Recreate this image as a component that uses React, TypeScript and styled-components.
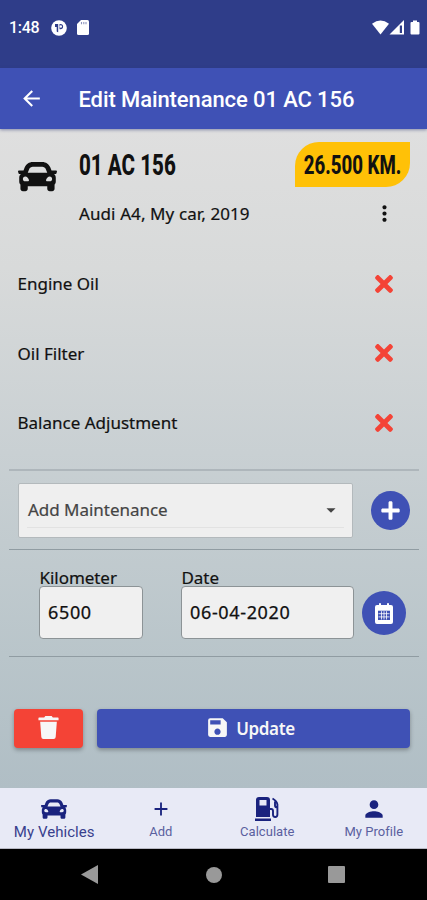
import React from 'react';
import styled, { createGlobalStyle } from 'styled-components';
import { FaCar, FaTimes, FaPlus } from 'react-icons/fa';
import { MdArrowBack, MdSave, MdPerson, MdMoreVert, MdAdd, MdArrowDropDown } from 'react-icons/md';

const GlobalStyle = createGlobalStyle`
  * { box-sizing: border-box; }
  body { margin: 0; font-family: 'Noto Sans', 'Open Sans', sans-serif; }
  svg { display: block; flex: none; }
`;

const Screen = styled.div`
  width: 427px;
  height: 900px;
  display: flex;
  flex-direction: column;
  overflow: hidden;
  background: #000;
`;

const StatusBar = styled.header`
  height: 68px;
  flex: none;
  display: flex;
  justify-content: space-between;
  align-items: flex-start;
  padding: 18px 6px 0 9px;
  background: #2f3d89;
  color: #fff;
  font: 500 16px/20px Roboto, sans-serif;
`;

const StatusGroup = styled.div<{ $gap: number }>`
  display: flex;
  align-items: center;
  height: 19px;
  gap: ${p => p.$gap}px;
`;

const Clock = styled.span`
  width: 32px;
  letter-spacing: -0.3px;
`;

const AppBar = styled.div`
  height: 60.5px;
  flex: none;
  display: flex;
  align-items: center;
  gap: 36px;
  padding: 1px 0 0 18.5px;
  background: #3f51b5;
  color: #fff;
  position: relative;
  box-shadow: 0 1px 3px rgba(50, 60, 120, 0.5);
`;

const Title = styled.h1`
  margin: 2px 0 0 -1px;
  font: 500 22px/30px Roboto, sans-serif;
  letter-spacing: -0.1px;
  white-space: nowrap;
`;

const Content = styled.main`
  height: 659.5px;
  flex: none;
  background: linear-gradient(180deg, #dfdfdf 0%, #d8dada 21%, #c9d0d3 49%, #b9c5ca 80%, #b0bec5 100%);
  color: #111;
`;

const Vehicle = styled.section`
  height: 120.5px;
  display: grid;
  grid-template-columns: 61px 1fr auto;
  padding-left: 18px;
`;

const VehicleIcon = styled.div`
  padding-top: 28px;
`;

const VehicleText = styled.div`
  padding-top: 20.5px;
`;

const Plate = styled.div`
  height: 32px;
  width: 130px;
  font: 800 29px/32px Roboto, sans-serif;
  white-space: nowrap;
  transform: scaleX(0.71);
  transform-origin: 0 50%;
`;

const Description = styled.div`
  margin-top: 21px;
  font-size: 17px;
  line-height: 24px;
  letter-spacing: 0.1px;
  white-space: nowrap;
  -webkit-text-stroke: 0.2px currentColor;
`;

const VehicleSide = styled.div`
  width: 132px;
  padding-top: 13.5px;
`;

const Badge = styled.div`
  width: 115px;
  height: 45px;
  display: flex;
  align-items: center;
  justify-content: center;
  border-radius: 24px 0 24px 0;
  background: #ffc107;
`;

const BadgeText = styled.span`
  font: 800 25px/30px Roboto, sans-serif;
  white-space: nowrap;
  transform: translateY(1px) scaleX(0.745);
`;

const MenuButton = styled.div`
  padding: 14px 0 0 76.5px;
`;

const Item = styled.div`
  height: 69.5px;
  display: flex;
  align-items: center;
  justify-content: space-between;
  padding: 0 34px 0 17.5px;
  font-size: 17px;
  -webkit-text-stroke: 0.2px currentColor;
`;

const RemoveIcon = styled(FaTimes)`
  width: 18px;
  height: 26px;
  color: #f44336;
`;

const Divider = styled.div<{ $top: number; $strong?: boolean }>`
  height: ${p => (p.$strong ? 2 : 1)}px;
  margin: ${p => p.$top}px 8px 0 9px;
  background: ${p => (p.$strong ? '#aeb6bb' : '#909ca2')};
`;

const AddRow = styled.div`
  height: 78px;
  display: flex;
  align-items: center;
  gap: 18px;
  padding-left: 18px;
`;

const Select = styled.div`
  width: 335px;
  height: 55px;
  padding: 3px 8px 0 8px;
  border: 1.5px solid #b3b9bc;
  border-radius: 2px;
  background: #efefef;
  color: #444;
`;

const SelectValue = styled.div`
  height: 41px;
  display: flex;
  align-items: center;
  justify-content: space-between;
  border-bottom: 1px solid #e2e2e2;
  font-size: 17px;
  letter-spacing: -0.03px;
  padding: 6px 2px 0 1px;
  -webkit-text-stroke: 0.2px currentColor;
`;

const RoundButton = styled.div<{ $size: number }>`
  width: ${p => p.$size}px;
  height: ${p => p.$size}px;
  display: flex;
  align-items: center;
  justify-content: center;
  border-radius: 50%;
  background: #3f51b5;
  color: #fff;
`;

const FieldRow = styled.div`
  height: 106px;
  display: flex;
  align-items: flex-start;
  padding: 15px 0 0 39px;
`;

const Field = styled.div<{ $width: number; $gap: number }>`
  width: ${p => p.$width}px;
  margin-right: ${p => p.$gap}px;
`;

const Label = styled.div`
  height: 21px;
  padding-left: 0.5px;
  font-size: 17px;
  line-height: 25px;
  letter-spacing: -0.05px;
  -webkit-text-stroke: 0.2px currentColor;
`;

const Input = styled.div`
  height: 53px;
  padding: 0 8px 2px;
  display: flex;
  align-items: center;
  border: 1.5px solid #8c9396;
  border-radius: 4px;
  background: #f0f0f0;
  font-size: 18px;
  letter-spacing: 0.65px;
  -webkit-text-stroke: 0.25px currentColor;
`;

const CalendarSlot = styled.div`
  padding-top: 26px;
`;

const Actions = styled.div`
  display: flex;
  gap: 14px;
  padding: 52px 17px 0 14px;
`;

const Button = styled.div<{ $color: string; $width?: number }>`
  height: 39px;
  flex: ${p => (p.$width ? `0 0 ${p.$width}px` : '1')};
  display: flex;
  align-items: center;
  justify-content: center;
  gap: 6px;
  padding: 0 ${p => (p.$width ? 1 : 7)}px 2px 0;
  border-radius: 4px;
  background: ${p => p.$color};
  color: #f7f7f7;
  font-size: 17px;
  font-weight: 600;
  letter-spacing: -0.4px;
  box-shadow: 0 2px 4px rgba(0, 0, 0, 0.3);
`;

const ButtonLabel = styled.span`
  padding-top: 2px;
`;

const TabBar = styled.nav`
  height: 61px;
  flex: none;
  display: grid;
  grid-template-columns: repeat(4, 1fr);
  padding-left: 1px;
  background: #e8eaf6;
  border-bottom: 1px solid #b8b9c4;
`;

const Tab = styled.div<{ $active?: boolean }>`
  display: flex;
  flex-direction: column;
  align-items: center;
  color: #1a237e;
  font: 400 ${p => (p.$active ? 15 : 13)}px/20px Roboto, sans-serif;
  letter-spacing: ${p => (p.$active ? 0.05 : 0.03)}px;
  white-space: nowrap;
`;

const TabIcon = styled.div`
  height: 34px;
  display: flex;
  align-items: center;
  justify-content: center;
  padding-top: 8px;
`;

const TabLabel = styled.span<{ $active?: boolean }>`
  color: ${p => (p.$active ? '#38408d' : '#5a609f')};
`;

const SystemBar = styled.footer`
  height: 51px;
  flex: none;
  display: flex;
  justify-content: space-between;
  align-items: center;
  padding: 0 82px 0 81px;
  background: #000;
`;

const items = ['Engine Oil', 'Oil Filter', 'Balance Adjustment'];

const AppGlyph = () => (
  <svg width="16" height="16" viewBox="0 0 16 16">
    <circle cx="8" cy="8" r="7.8" fill="#fff" />
    <path d="M4 4h3.200v8.200a4.500 4.500 0 0 1-1.500-.8V7H4zM8.500 4h1a2.600 2.600 0 0 1 0 5.200h-1z" fill="#2f3d89" />
    <circle cx="9.800" cy="6.500" r="1.200" fill="#fff" />
  </svg>
);

const SdCard = () => (
  <svg width="12" height="15" viewBox="0 0 12 15">
    <path d="M4 0h6.500A1.500 1.500 0 0 1 12 1.500v12a1.500 1.500 0 0 1-1.500 1.500h-9A1.500 1.500 0 0 1 0 13.500V4z" fill="#fff" />
    <path d="M4.500 2v2.200M6.800 2v2.200M9 2v2.200" stroke="#8d94bd" strokeWidth="1.100" />
  </svg>
);

const Signals = () => (
  <svg width="49" height="16" viewBox="0 0 49 16">
    <path d="M0 3.700Q8.500-2.800 17 3.700L8.500 14.500z" fill="#fff" />
    <path d="M17.500 14.500L32 0v14.500z" fill="#fff" />
    <path d="M27.800 5.500h2.200v7.500h-2.200z" fill="#2f3d89" />
    <path d="M38.500 3a1 1 0 0 1 1-1H41V.5h4V2h1.500a1 1 0 0 1 1 1v10.500a1 1 0 0 1-1 1h-7a1 1 0 0 1-1-1z" fill="#fff" />
  </svg>
);

const Calendar = () => (
  <svg width="18" height="21" viewBox="0 0 18 21">
    <path d="M2 2h2V.8Q4 0 5 0t1 .8V2h6V.8q0-.8 1-.8t1 .8V2h2a2 2 0 0 1 2 2v15a2 2 0 0 1-2 2H2a2 2 0 0 1-2-2V4a2 2 0 0 1 2-2z" fill="#fff" />
    <path d="M3 7.700h12v9.300H3z" fill="#3f51b5" />
    <path d="M3.500 10.700h11M3.500 13.900h11M6.500 8.200v8.300M11.500 8.200v8.300M9 8.200v8.300" stroke="#fff" strokeWidth=".8" />
  </svg>
);

const Trash = () => (
  <svg width="21" height="23" viewBox="0 0 21 24">
    <path d="M0 2.200q0-.7.700-.7H6L7.200 0h6.600L15 1.500h5.300q.7 0 .7.700v2.300H0zM1.800 6h17.400l-1.200 16q-.2 2-2.200 2H5.200Q3.200 24 3 22z" fill="#f7f7f7" />
  </svg>
);

const FuelPump = () => (
  <svg width="25" height="24" viewBox="0 0 25 24">
    <path fillRule="evenodd" d="M4 0h8a3 3 0 0 1 3 3v17H1V3a3 3 0 0 1 3-3zm.5 3v5.500h7V3zM0 21.500h16V24H0z" fill="#1a237e" />
    <path d="M15 12h1.200q1.800 0 1.800 2v3.500q0 2.500 2.200 2.500t2.200-2.500V7.500q-.5-3.500-4.900-6M20 4.500v4q0 2 2.400 2" fill="none" stroke="#1a237e" strokeWidth="1.900" />
  </svg>
);

export default function App() {
  return (
    <Screen>
      <GlobalStyle />
      <StatusBar>
        <StatusGroup $gap={10}>
          <Clock>1:48</Clock>
          <AppGlyph />
          <SdCard />
        </StatusGroup>
        <StatusGroup $gap={0}><Signals /></StatusGroup>
      </StatusBar>
      <AppBar>
        <MdArrowBack size={25} />
        <Title>Edit Maintenance 01 AC 156</Title>
      </AppBar>
      <Content>
        <Vehicle>
          <VehicleIcon><FaCar size={39} /></VehicleIcon>
          <VehicleText>
            <Plate>01 AC 156</Plate>
            <Description>Audi A4, My car, 2019</Description>
          </VehicleText>
          <VehicleSide>
            <Badge><BadgeText>26.500 KM.</BadgeText></Badge>
            <MenuButton><MdMoreVert size={25} /></MenuButton>
          </VehicleSide>
        </Vehicle>
        {items.map(name => (
          <Item key={name}>
            <span>{name}</span>
            <RemoveIcon />
          </Item>
        ))}
        <Divider $top={11.5} $strong />
        <AddRow>
          <Select>
            <SelectValue>Add Maintenance<MdArrowDropDown size={22} /></SelectValue>
          </Select>
          <RoundButton $size={39}><FaPlus size={21} /></RoundButton>
        </AddRow>
        <Divider $top={0} />
        <FieldRow>
          <Field $width={104} $gap={38}>
            <Label>Kilometer</Label>
            <Input>6500</Input>
          </Field>
          <Field $width={173} $gap={8}>
            <Label>Date</Label>
            <Input>06-04-2020</Input>
          </Field>
          <CalendarSlot><RoundButton $size={44}><Calendar /></RoundButton></CalendarSlot>
        </FieldRow>
        <Divider $top={0} />
        <Actions>
          <Button $color="#f44336" $width={69}><Trash /></Button>
          <Button $color="#3f51b5"><MdSave size={25} /><ButtonLabel>Update</ButtonLabel></Button>
        </Actions>
      </Content>
      <TabBar>
        <Tab $active><TabIcon><FaCar size={26} /></TabIcon><TabLabel $active>My Vehicles</TabLabel></Tab>
        <Tab><TabIcon><MdAdd size={22} /></TabIcon><TabLabel>Add</TabLabel></Tab>
        <Tab><TabIcon><FuelPump /></TabIcon><TabLabel>Calculate</TabLabel></Tab>
        <Tab><TabIcon><MdPerson size={26} /></TabIcon><TabLabel>My Profile</TabLabel></Tab>
      </TabBar>
      <SystemBar>
        <svg width="17" height="19" viewBox="0 0 17 19"><path d="M17 0v19L0 9.500z" fill="#999" /></svg>
        <svg width="17" height="16" viewBox="-1 0 17 16"><circle cx="8" cy="8" r="8" fill="#999" /></svg>
        <svg width="17" height="17" viewBox="0 0 17 17"><rect width="17" height="17" rx="1" fill="#999" /></svg>
      </SystemBar>
    </Screen>
  );
}
